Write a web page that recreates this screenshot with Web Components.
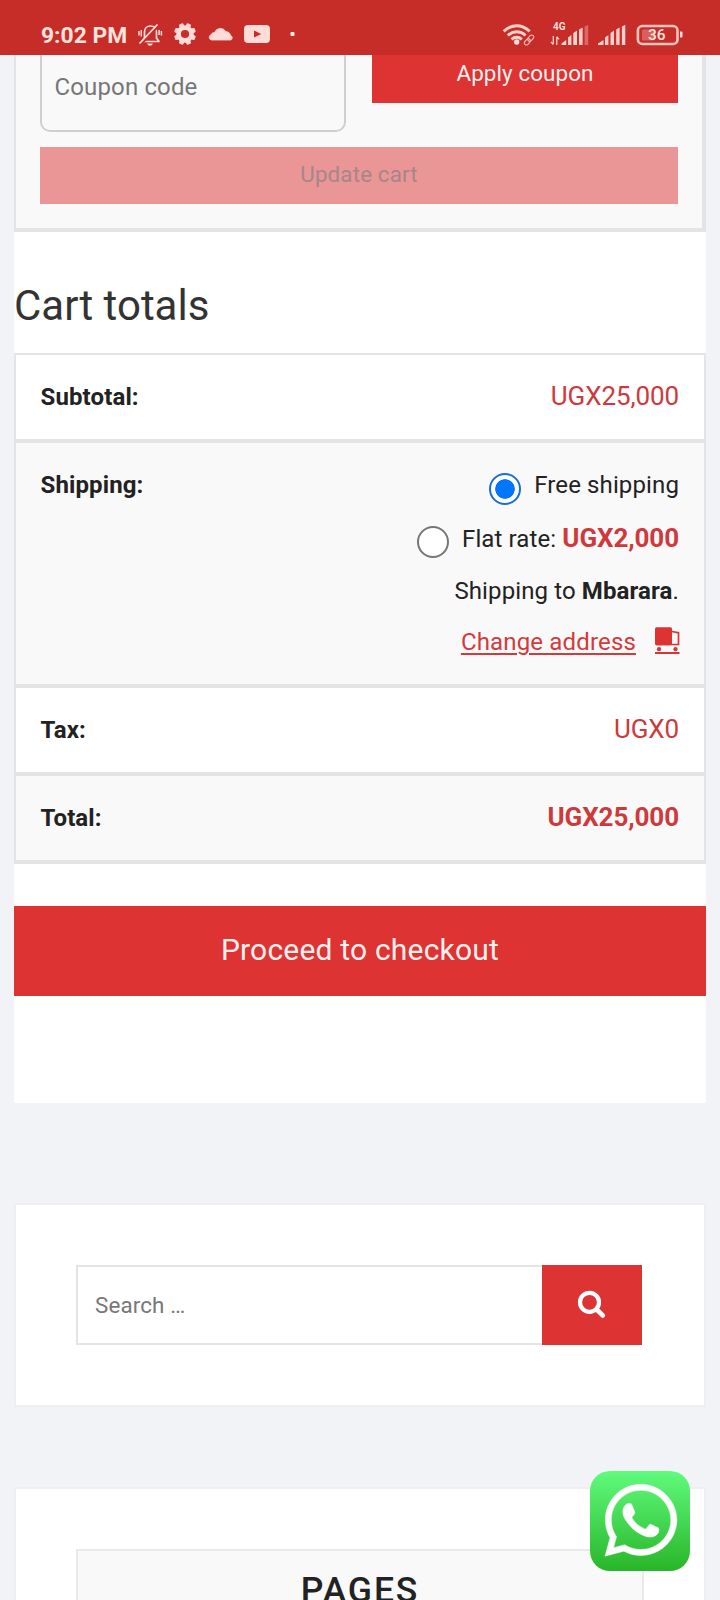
<!DOCTYPE html>
<html lang="en">
<head>
<meta charset="utf-8">
<title>Cart</title>
<style>
html,body{margin:0;padding:0}
body{width:720px;height:1600px;overflow:hidden;background:#f2f3f7;color:#222;font-family:Roboto,"Liberation Sans",sans-serif;font-size:24px;--red:#dd3333;--line:#e4e4e5}
</style>
</head>
<body>
<cart-page></cart-page>
<script>
const define = (name, html, ready) => {
  const tpl = document.createElement('template');
  tpl.innerHTML = html;
  customElements.define(name, class extends HTMLElement {
    constructor() {
      super();
      this.attachShadow({mode: 'open'}).append(tpl.content.cloneNode(true));
    }
    connectedCallback() { if (ready) ready(this, this.shadowRoot); }
  });
};

const TEETH = [22.5, 67.5, 112.5, 157.5, 202.5, 247.5, 292.5, 337.5]
  .map(a => `<rect x="-2.400" y="-11" width="4.800" height="5" rx="1.400" transform="rotate(${a})"/>`).join('');
const GLYPHS = {
  bell: [137, 23, 26, 24, '<path d="M142 41.500h17l-2.500-3.500v-6c0-3.500-2.500-6-6-6s-6 2.500-6 6v6z" fill="none" stroke="#ffdcd8" stroke-width="1.700" stroke-linejoin="round"/><path d="M147 43.600h6q-1 2.200-3 2.200t-3-2.200z"/><path d="M141.200 44.200l17-18" stroke="#c62c28" stroke-width="2.200"/><path d="M139.500 43.500l18-19" stroke="#ffdcd8" stroke-width="1.800"/><path d="M139 31v4.500M141.300 30v6.500M161.400 31v4.500M159.100 30v5" stroke="#ffdcd8" stroke-width="1.500"/>'],
  gear: [173, 22, 24, 24, `<g transform="translate(185 34)">${TEETH}<circle r="6.400" fill="none" stroke="#ffdcd8" stroke-width="4.600"/></g>`],
  cloud: [208, 22, 26, 24, '<path d="M211.500 40a2.700 2.700 0 0 1-.5-5.200c.7-1.600 2-2.300 3.500-2.200a6.300 6.300 0 0 1 11.300-1.100c2.700.200 4.300 1.800 4.800 4.100a2.300 2.300 0 0 1 0 4.400z" stroke="#ffdcd8" stroke-width=".8"/>'],
  tube: [243, 22, 28, 24, '<rect x="244" y="25" width="26" height="18" rx="4"/><path d="M254 30.500v7l7.300-3.500z" fill="#c62c28"/>'],
  dot: [289, 22, 6, 24, '<rect x="290.500" y="32" width="4" height="4" rx="1" fill="#fff3e8"/>'],
  wifi: [502, 22, 34, 24, '<g fill="none" stroke="#ffcfc9" stroke-width="2.900"><path d="M503.700 31.300q6.200-5.600 13-5.600t13 5.600"/><path d="M507.800 35.500q4-3.700 8.900-3.700t8.900 3.700"/><path d="M511.500 39.300q2.300-2 5.200-2t5.200 2"/></g><circle cx="516.700" cy="42" r="2.700"/><g transform="translate(529 40) rotate(-48)" fill="none" stroke="#f6b3ac" stroke-width="1.200"><rect x="-6" y="-2.100" width="7" height="4.200" rx="2.100"/><rect x="-1" y="-2.100" width="7" height="4.200" rx="2.100"/></g>'],
  mobile: [550, 20, 40, 26, '<text x="553" y="30.300" font-family="Roboto,sans-serif" font-weight="700" font-size="10">4G</text><path d="M553.300 36v8M551 41.800l2.300 2.700M556.800 45v-8M559 39.300l-2.200-2.700" fill="none" stroke="#ffcfc9" stroke-width="1.300"/><path fill="#ffcfc9" d="M561.500 45v-1.500l4.700-3.500v5zM568 37.500l3.400-2.500v10H568zM573.300 33l3.700-2.500V45h-3.700zM579 29.500l3.600-2V45H579z"/><path d="M584.600 26.500l3.600-1.500v20h-3.600z" opacity=".35"/>'],
  bars: [597, 20, 30, 26, '<path fill="#ffcfc9" d="M598 45v-1.500l5.500-3.500v5zM605 37.500l3.400-2.500v10H605zM610.500 33l3.500-2.500V45h-3.500zM616.200 29.500l3.400-2V45h-3.400zM621.900 26.500l3.400-1.700V45h-3.400z"/>'],
  battery: [636, 22, 48, 26, '<rect x="637.900" y="26" width="39.600" height="18" rx="4.500" fill="none" stroke="#ffc4bd" stroke-width="2.600"/><path d="M680 31.500h1.500q1 0 1 1v4q0 1-1 1H680z"/><rect x="642" y="29.500" width="13" height="11" rx="1.500" opacity=".3"/><text x="656.800" y="40.300" text-anchor="middle" font-family="Roboto,sans-serif" font-weight="500" font-size="15.500" fill="#ffe6e2">36</text>']
};
define('status-icon', `<style>:host{display:block;flex:none;align-self:flex-start}svg{display:block}</style>`, (el, root) => {
  const [x, y, w, h, art] = GLYPHS[el.getAttribute('name')];
  el.style.marginTop = y + 'px';
  root.innerHTML += `<svg width="${w}" height="${h}" viewBox="${x} ${y} ${w} ${h}" fill="#ffdcd8">${art}</svg>`;
});

define('status-bar', `<style>
:host{display:flex;flex:none;box-sizing:border-box;height:55px;padding:0 36px 0 41px;background:#c62c28;color:#ffe3dd;overflow:hidden}
time{width:96px;padding-top:21px;font-weight:700;font-size:22.800px;line-height:29px;letter-spacing:.02px;white-space:nowrap}
.left,.right{display:flex}.left{flex:1}
.g10{margin-left:10px}.g11{margin-left:11px}.g9{margin-left:9px}.g18{margin-left:18px}.g14{margin-left:14px}.g7{margin-left:7px}
</style>
<div class="left"><time>9:02 PM</time><status-icon name="bell"></status-icon><status-icon class="g10" name="gear"></status-icon><status-icon class="g11" name="cloud"></status-icon><status-icon class="g9" name="tube"></status-icon><status-icon class="g18" name="dot"></status-icon></div>
<div class="right"><status-icon name="wifi"></status-icon><status-icon class="g14" name="mobile"></status-icon><status-icon class="g7" name="bars"></status-icon><status-icon class="g9" name="battery"></status-icon></div>`);

define('coupon-form', `<style>
:host{display:block;box-sizing:border-box;height:177px;padding:0 24px;border:solid #e3e4e6;border-width:0 4px 4px 2px;background:#f9f9f9}
.row{display:grid;grid-template-columns:306px 306px;gap:26px;align-items:start}
.code{box-sizing:border-box;height:77px;border:2px solid #cfcfd1;border-top:0;border-radius:0 0 10px 10px;padding:16px 12.500px 0;line-height:32px;letter-spacing:.14px;color:#777}
.btn{background:var(--red);color:#fff0ee;text-align:center;font-size:22.400px}
.apply{height:48px;line-height:36.600px;letter-spacing:.1px}
.update{height:57px;margin-top:15px;line-height:55.400px;background:#ea9696;color:#a88589;letter-spacing:.14px}
</style>
<div class="row"><div class="code">Coupon code</div><div class="btn apply">Apply coupon</div></div>
<div class="btn update">Update cart</div>`);

define('total-row', `<style>
:host{display:flex;box-sizing:border-box;justify-content:space-between;align-items:flex-start;height:88px;padding:0 25px 0 24.500px;border-bottom:4px solid var(--line);line-height:83px;background:#fff}
:host([shade]){background:#f9f9f9}:host([tall]){height:245px}
b{letter-spacing:.12px;line-height:85px}
</style><b><slot name="label"></slot></b><div><slot></slot></div>`);

define('price-tag', `<style>
:host{font-size:26px;letter-spacing:-.1px;color:#cf393b}:host([strong]){font-weight:700}
</style><slot></slot>`);

define('radio-line', `<style>
:host{display:flex;justify-content:flex-end;height:53px;line-height:54px;letter-spacing:.12px}
i{flex:none;box-sizing:border-box;width:32px;height:32px;margin:15px 13px 0 0;border:2px solid #767676;border-radius:50%;background:#fff}
:host([checked]) i{border-color:#1a6dd8;background:radial-gradient(circle,#0075ff 9.400px,#fff 10.100px)}
span{white-space:pre}
</style><i></i><span><slot></slot></span>`);

define('shipping-options', `<style>
:host{display:flex;flex-direction:column;padding-top:15px}
p{margin:0;height:53px;line-height:55px;text-align:right;letter-spacing:.12px}
.change{display:flex;justify-content:flex-end;height:49px;line-height:51px;color:#d33a3c;letter-spacing:.16px}
a{text-decoration:underline;text-decoration-thickness:2px;text-underline-offset:3px}
svg{display:block;margin:10px -.5px 0 18.500px}
</style>
<radio-line checked>Free shipping</radio-line>
<radio-line>Flat rate: <price-tag strong>UGX2,000</price-tag></radio-line>
<p>Shipping to <b>Mbarara</b>.</p>
<div class="change"><a>Change address</a><svg width="25" height="28" viewBox="0 0 25 28" fill="#dd3333"><rect y=".3" width="17" height="18" rx="1.500"/><path d="M17 4.500l6.500 1.300v11.700H1" fill="none" stroke="#dd3333" stroke-width="1.700"/><circle cx="4" cy="22.200" r="2.100"/><circle cx="20.500" cy="22.200" r="2.100"/><rect y="25" width="24.500" height="2"/></svg></div>`);

define('cart-totals', `<style>
:host{display:block;box-sizing:border-box;height:871px;background:#fff}
h2{margin:0;height:121px;line-height:147px;font-weight:400;font-size:42px;letter-spacing:0;color:#333}
.table{border:solid var(--line);border-width:2px 2px 0}
.checkout{height:90px;margin-top:42px;background:var(--red);color:#fff0ee;text-align:center;font-size:30px;line-height:87.400px;letter-spacing:.2px}
</style>
<h2>Cart totals</h2>
<div class="table">
<total-row><span slot="label">Subtotal:</span><price-tag>UGX25,000</price-tag></total-row>
<total-row shade tall><span slot="label">Shipping:</span><shipping-options></shipping-options></total-row>
<total-row><span slot="label">Tax:</span><price-tag>UGX0</price-tag></total-row>
<total-row shade><span slot="label">Total:</span><price-tag strong>UGX25,000</price-tag></total-row>
</div>
<div class="checkout">Proceed to checkout</div>`);

define('side-widget', `<style>
:host{display:block;box-sizing:border-box;padding:60px;background:#fff;border:2px solid #efeff1}
</style><slot></slot>`);

define('search-form', `<style>
:host{display:flex;width:566px;height:80px}
.field{flex:1;box-sizing:border-box;border:2px solid var(--line);border-right:0;padding-left:17px;line-height:76px;font-size:22.400px;letter-spacing:.13px;color:#777}
.go{width:100px;background:var(--red)}svg{display:block}
</style><div class="field">Search …</div><div class="go"><svg width="100" height="80" viewBox="0 0 100 80" fill="none" stroke="#fff"><circle cx="47.500" cy="37.300" r="9.500" stroke-width="4.200"/><path d="M54.700 44.500l6 5.900" stroke-width="4.800" stroke-linecap="round"/></svg></div>`);

define('widget-title', `<style>
:host{display:block;box-sizing:border-box;width:568px;height:100px;border:2px solid #e9e9ea;background:#f9f9f9;text-align:center;font-weight:500;font-size:35.500px;line-height:79px;letter-spacing:1.900px;color:#222}
</style><slot></slot>`);

define('whatsapp-button', `<style>
:host{position:absolute;left:590px;top:1471px;width:100px;height:100px;border-radius:20px;background:linear-gradient(#60fb7d,#29b529);overflow:hidden}
svg{display:block}
</style><svg width="100" height="100" viewBox="0 0 300 300" fill="#fff"><path transform="translate(45 24.500) scale(.481)" stroke="#fff" stroke-width="3" d="M380.900 97.100C339 55.100 283.200 32 223.900 32c-122.400 0-222 99.600-222 222 0 39.100 10.200 77.300 29.600 111L0 480l117.700-30.900c32.400 17.700 68.900 27 106.100 27h.1c122.300 0 224.100-99.600 224.100-222 0-59.300-25.200-115-67.100-157zm-157 341.600c-33.200 0-65.700-8.900-94-25.700l-6.700-4-69.800 18.300L72 359.200l-4.400-7c-18.500-29.400-28.200-63.300-28.200-98.200 0-101.700 82.800-184.500 184.600-184.500 49.300 0 95.600 19.200 130.400 54.100 34.800 34.900 56.200 81.200 56.100 130.500 0 101.800-84.900 184.600-186.600 184.600zm101.200-138.200c-5.500-2.800-32.800-16.200-37.900-18-5.100-1.900-8.800-2.800-12.500 2.800-3.700 5.600-14.300 18-17.600 21.800-3.200 3.700-6.500 4.200-12 1.400-32.600-16.300-54-29.100-75.500-66-5.700-9.800 5.700-9.100 16.300-30.300 1.800-3.700.9-6.900-.5-9.700-1.400-2.800-12.500-30.100-17.100-41.200-4.500-10.800-9.100-9.300-12.500-9.500-3.200-.2-6.900-.2-10.600-.2-3.700 0-9.700 1.400-14.800 6.900-5.100 5.600-19.400 19-19.400 46.300 0 27.300 19.900 53.700 22.600 57.400 2.800 3.700 39.100 59.700 94.800 83.800 35.200 15.200 49 16.500 66.600 13.900 10.700-1.600 32.800-13.400 37.400-26.400 4.600-13 4.600-24.100 3.200-26.400-1.300-2.500-5-3.900-10.500-6.600z"/></svg>`);

define('cart-page', `<style>
:host{display:block;position:relative;width:720px;height:1600px;overflow:hidden}
main{display:flex;flex-direction:column;padding:0 14px}
.search{margin-top:100px;height:204px}.pages{margin-top:80px;height:200px}
</style>
<status-bar></status-bar>
<main>
<coupon-form></coupon-form>
<cart-totals></cart-totals>
<side-widget class="search"><search-form></search-form></side-widget>
<side-widget class="pages"><widget-title>PAGES</widget-title></side-widget>
</main>
<whatsapp-button></whatsapp-button>`);
</script>
</body>
</html>
